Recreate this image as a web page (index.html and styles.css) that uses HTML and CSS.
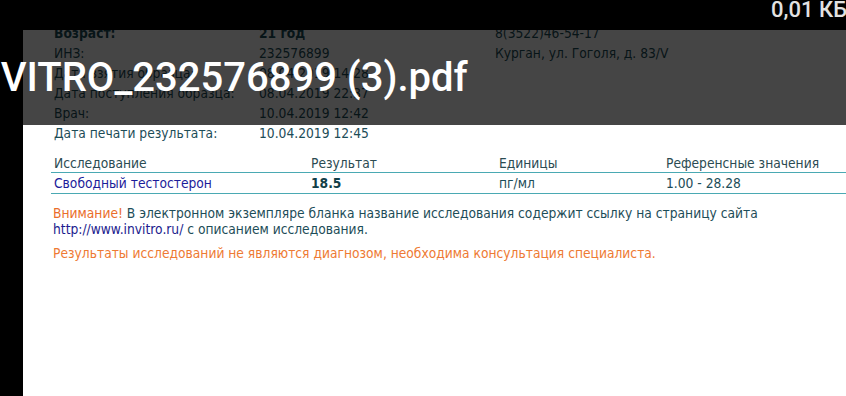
FILE: index.html
```html
<!DOCTYPE html>
<html lang="ru">
<head>
<meta charset="utf-8">
<title>INVITRO_232576899 (3).pdf</title>
<link rel="stylesheet" href="styles.css">
</head>
<body>
<div class="page">
  <div class="info">
    <div class="lbl b">Возраст:</div><div class="val b">21 год</div><div class="val">8(3522)46-54-17</div>
    <div class="lbl">ИНЗ:</div><div class="val">232576899</div><div class="val">Курган, ул. Гоголя, д. 83/V</div>
    <div class="lbl">Дата взятия образца:</div><div class="val">08.04.2019 14:28</div><div></div>
    <div class="lbl">Дата поступления образца:</div><div class="val">08.04.2019 22:37</div><div></div>
    <div class="lbl">Врач:</div><div class="val">10.04.2019 12:42</div><div></div>
    <div class="lbl">Дата печати результата:</div><div class="val">10.04.2019 12:45</div><div></div>
  </div>
  <div class="table">
    <div class="tr head">
      <div class="c1">Исследование</div><div class="c2">Результат</div><div class="c3">Единицы</div><div class="c4">Референсные значения</div>
    </div>
    <div class="tr row">
      <div class="c1 test">Свободный тестостерон</div><div class="c2 res">18.5</div><div class="c3">пг/мл</div><div class="c4">1.00 - 28.28</div>
    </div>
  </div>
  <div class="notes">
    <p class="note"><span class="warn">Внимание!</span> В электронном экземпляре бланка название исследования содержит ссылку на страницу сайта<br><span class="link">http://www.invitro.ru/</span> с описанием исследования.</p>
    <p class="disclaimer">Результаты исследований не являются диагнозом, необходима консультация специалиста.</p>
  </div>
</div>
<div class="topbar"><span class="size">0,01 КБ</span></div>
<div class="shade"><div class="title">INVITRO_232576899 (3).pdf</div></div>
</body>
</html>
```
FILE: styles.css
```css
html, body {
  margin: 0;
  padding: 0;
  background: #000;
  height: 100%;
  overflow: hidden;
}
body {
  font-family: "DejaVu Sans Condensed", "DejaVu Sans", sans-serif;
  font-size: 13.7px;
  color: #1d4d58;
}
.page {
  margin-left: 23px;
  background: #fff;
  height: 396px;
  padding: 23px 0 0 28px;
  box-sizing: border-box;
}
.info {
  display: grid;
  grid-template-columns: 205px 236px 1fr;
  line-height: 20px;
  padding-left: 3px;
}
.b { font-weight: bold; }
.table {
  margin-top: 10px;
}
.tr {
  display: grid;
  grid-template-columns: 257px 188px 167px 1fr;
  border-bottom: 1.5px solid #4aa9b3;
  line-height: 16px;
}
.tr > div { padding-left: 3px; }
.head { padding: 2px 0 1px; color: #2b4b52; }
.row { padding: 2px 0 2px; }
.test { color: #1c1c9a; }
.res { font-weight: bold; color: #123e47; }
.notes { padding-left: 2px; }
.note {
  margin: 11px 0 0;
  line-height: 16px;
}
.warn { color: #ea6d2a; }
.link { color: #1c1c8e; }
.disclaimer {
  margin: 8px 0 0;
  line-height: 16px;
  color: #ee7a33;
}
.topbar {
  position: absolute;
  top: 0;
  left: 0;
  right: 0;
  height: 30px;
  background: #000;
  display: flex;
  justify-content: flex-end;
}
.size {
  font-family: Roboto, sans-serif;
  font-weight: 500;
  font-size: 22px;
  line-height: 20px;
  color: #e2e2e2;
  margin-right: -1px;
}
.shade {
  position: absolute;
  top: 30px;
  left: 0;
  right: 0;
  height: 95px;
  background: rgba(0, 0, 0, 0.73);
  overflow: hidden;
}
.title {
  font-family: Roboto, sans-serif;
  font-weight: 500;
  font-size: 40px;
  line-height: 46px;
  color: #fff;
  margin-top: 25px;
  margin-left: -39px;
  white-space: nowrap;
}
```
